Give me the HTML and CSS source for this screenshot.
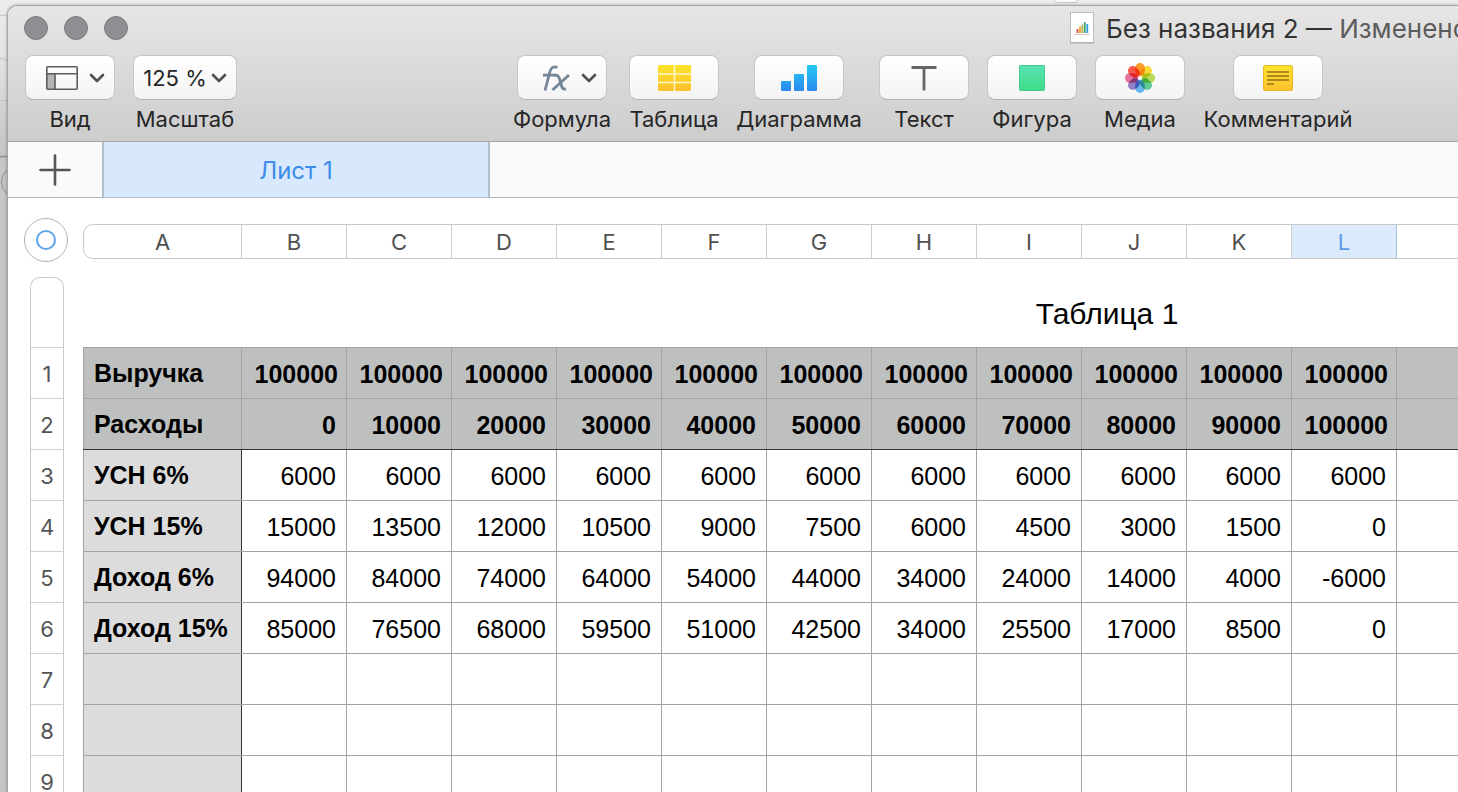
FILE: index.html
```html
<!DOCTYPE html>
<html lang="ru">
<head>
<meta charset="utf-8">
<title>Без названия 2</title>
<link rel="stylesheet" href="styles.css">
</head>
<body>
<svg class="backdrop" width="1100" height="220" viewBox="0 0 1100 220" fill="none" stroke="#aaa" aria-hidden="true">
  <path d="M0 15.500L8 15M0 58.500Q5 59 8 61M0 100.500H8" stroke="#c2c2c2"/>
  <path d="M0 156.500H8" stroke="#8c8c8c" stroke-width="1.500"/>
  <circle cx="17" cy="182" r="15.500" fill="#c4c4c4" stroke="#8f8f8f"/>
  <path d="M1054 -2V0Q1054 2.500 1058 2.500H1074Q1078 2.500 1078 0V-2" fill="#fafafa" stroke="#c8c8c8"/>
</svg>
<div class="window">
  <header class="chrome">
    <div class="titlebar">
      <div class="lights">
        <button class="light" aria-label="Закрыть"></button>
        <button class="light" aria-label="Свернуть"></button>
        <button class="light" aria-label="Развернуть"></button>
      </div>
      <div class="title">
        <svg class="doc" width="24" height="32" viewBox="0 0 24 32">
          <rect x="0.500" y="0.500" width="23" height="30" fill="#fff" stroke="#bcbcbc"/>
          <path d="M0 31H24" stroke="#aaa"/>
          <path d="M7.500 21V17" stroke="#e0503c" stroke-width="1.800"/>
          <path d="M10 21V14.500" stroke="#f0a030" stroke-width="1.800"/>
          <path d="M12.400 21V12.500" stroke="#a8b048" stroke-width="1.800"/>
          <path d="M14.800 21V10" stroke="#45a872" stroke-width="1.800"/>
          <path d="M17.300 21V12" stroke="#2f9fe0" stroke-width="1.800"/>
          <path d="M4 22.500H20" stroke="#e8c4b4"/>
        </svg>
        <span>Без названия 2 — <span class="edited">Изменено</span></span>
      </div>
    </div>
    <div class="toolbar">
      <div class="tools view-tools">
        <div class="tool">
          <button class="btn menu" id="b-view" aria-label="Вид">
            <svg width="32" height="24" viewBox="0 0 32 24" fill="none" stroke="#5c5c5c" stroke-width="1.600">
              <path d="M1 8H9V23H1Z" fill="#b5b5b5" stroke="none"/>
              <rect x="0.800" y="0.800" width="30.400" height="22.400" rx="1"/>
              <path d="M1 7.700H31M9 8V23"/>
            </svg>
            <svg width="16" height="10" viewBox="0 0 16 10" fill="none" stroke="#505050" stroke-width="2.600" stroke-linecap="round" stroke-linejoin="round"><path d="M2 2L8 8L14 2"/></svg>
          </button>
          <label for="b-view">Вид</label>
        </div>
        <div class="tool">
          <button class="btn zoom" id="b-zoom">125 %
            <svg width="16" height="10" viewBox="0 0 16 10" fill="none" stroke="#505050" stroke-width="2.600" stroke-linecap="round" stroke-linejoin="round"><path d="M2 2L8 8L14 2"/></svg>
          </button>
          <label for="b-zoom">Масштаб</label>
        </div>
      </div>
      <div class="tools insert-tools">
        <div class="tool">
          <button class="btn menu" id="b-fx" aria-label="Формула">
            <svg width="32" height="28" viewBox="0 0 32 28" fill="none" stroke="#748596" stroke-width="2.800">
              <path d="M19.500 3.400Q13.500 1.300 12 7.500L7 26.500M5 11.200H18"/>
              <path d="M15.800 11.400Q20 10.400 21.200 14L24 23Q24.800 25.600 28 24.900M31 11L14.500 26"/>
            </svg>
            <svg width="16" height="10" viewBox="0 0 16 10" fill="none" stroke="#505050" stroke-width="2.600" stroke-linecap="round" stroke-linejoin="round"><path d="M2 2L8 8L14 2"/></svg>
          </button>
          <label for="b-fx">Формула</label>
        </div>
        <div class="tool">
          <button class="btn" id="b-table" aria-label="Таблица">
            <svg width="33" height="26" viewBox="0 0 33 26">
              <defs><linearGradient id="gy" x1="0" y1="0" x2="0" y2="1"><stop offset="0" stop-color="#fde32c"/><stop offset="1" stop-color="#fcc02c"/></linearGradient></defs>
              <rect width="33" height="26" rx="1.500" fill="url(#gy)"/>
              <path d="M0 9H33M0 17.500H33M16.500 0V26" stroke="#fff6c8" stroke-width="1.500"/>
            </svg>
          </button>
          <label for="b-table">Таблица</label>
        </div>
        <div class="tool">
          <button class="btn" id="b-chart" aria-label="Диаграмма">
            <svg width="36" height="26" viewBox="0 0 36 26">
              <defs><linearGradient id="gb" gradientUnits="userSpaceOnUse" x1="0" y1="0" x2="0" y2="26"><stop offset="0" stop-color="#25c8f2"/><stop offset="1" stop-color="#2a8af0"/></linearGradient></defs>
              <g fill="url(#gb)"><rect y="16" width="10" height="10" rx="1.200"/><rect x="13" y="9" width="10" height="17" rx="1.200"/><rect x="26" width="10" height="26" rx="1.200"/></g>
            </svg>
          </button>
          <label for="b-chart">Диаграмма</label>
        </div>
        <div class="tool">
          <button class="btn" id="b-text" aria-label="Текст">
            <svg width="26" height="26" viewBox="0 0 26 26" fill="none" stroke="#666"><path d="M0.500 2.500H25.500" stroke-width="2.800"/><path d="M13 2V25.500" stroke-width="2.800"/></svg>
          </button>
          <label for="b-text">Текст</label>
        </div>
        <div class="tool">
          <button class="btn" id="b-shape" aria-label="Фигура">
            <svg width="26" height="26" viewBox="0 0 26 26">
              <defs><linearGradient id="gg" x1="0" y1="0" x2="0" y2="1"><stop offset="0" stop-color="#5ae0b4"/><stop offset="1" stop-color="#3fde8a"/></linearGradient></defs>
              <rect x="0.500" y="0.500" width="25" height="25" rx="1" fill="url(#gg)" stroke="#3fc892"/>
            </svg>
          </button>
          <label for="b-shape">Фигура</label>
        </div>
        <div class="tool">
          <button class="btn" id="b-media" aria-label="Медиа">
            <svg class="petals" width="32" height="32" viewBox="-16 -16 32 32">
              <rect x="-4.800" y="-15" width="9.600" height="13" rx="4.800" fill="#fb9a2c"/>
              <rect x="-4.800" y="-15" width="9.600" height="13" rx="4.800" fill="#f8dc38" transform="rotate(45)"/>
              <rect x="-4.800" y="-15" width="9.600" height="13" rx="4.800" fill="#b6dc5c" transform="rotate(90)"/>
              <rect x="-4.800" y="-15" width="9.600" height="13" rx="4.800" fill="#62c898" transform="rotate(135)"/>
              <rect x="-4.800" y="-15" width="9.600" height="13" rx="4.800" fill="#68b4ee" transform="rotate(180)"/>
              <rect x="-4.800" y="-15" width="9.600" height="13" rx="4.800" fill="#9480c4" transform="rotate(225)"/>
              <rect x="-4.800" y="-15" width="9.600" height="13" rx="4.800" fill="#e4709c" transform="rotate(270)"/>
              <rect x="-4.800" y="-15" width="9.600" height="13" rx="4.800" fill="#fa584c" transform="rotate(315)"/>
            </svg>
          </button>
          <label for="b-media">Медиа</label>
        </div>
        <div class="tool">
          <button class="btn" id="b-comment" aria-label="Комментарий">
            <svg width="30" height="26" viewBox="0 0 30 26">
              <rect x="0.500" y="0.500" width="29" height="25" rx="1.500" fill="url(#gy)" stroke="#e8b828"/>
              <path d="M4 7H26M4 11H26M4 15H26M4 19H11" stroke="#94721a" stroke-width="1.600"/>
            </svg>
          </button>
          <label for="b-comment">Комментарий</label>
        </div>
      </div>
    </div>
  </header>
  <nav class="tabs">
    <button class="add" aria-label="Добавить лист"><svg width="32" height="32" viewBox="0 0 32 32" stroke="#555" stroke-width="2.600" stroke-linecap="round"><path d="M1.500 16H30.500M16 1.500V30.500"/></svg></button>
    <button class="tab">Лист 1</button>
  </nav>
  <main class="sheet">
    <button class="handle" aria-label="Выбрать таблицу"><span class="ring"></span></button>
    <div class="cols">
      <span>A</span><span>B</span><span>C</span><span>D</span><span>E</span><span>F</span><span>G</span><span>H</span><span>I</span><span>J</span><span>K</span><span class="selected">L</span><span></span>
    </div>
    <div class="rows">
      <span></span><span>1</span><span>2</span><span>3</span><span>4</span><span>5</span><span>6</span><span>7</span><span>8</span><span>9</span>
    </div>
    <table class="grid">
      <caption>Таблица 1</caption>
      <colgroup><col class="c-label"><col class="c-num" span="11"><col></colgroup>
      <thead>
        <tr><th>Выручка</th><th class="full">100000</th><th class="full">100000</th><th class="full">100000</th><th class="full">100000</th><th class="full">100000</th><th class="full">100000</th><th class="full">100000</th><th class="full">100000</th><th class="full">100000</th><th class="full">100000</th><th class="full">100000</th><th></th></tr>
        <tr><th>Расходы</th><th>0</th><th>10000</th><th>20000</th><th>30000</th><th>40000</th><th>50000</th><th>60000</th><th>70000</th><th>80000</th><th>90000</th><th class="full">100000</th><th></th></tr>
      </thead>
      <tbody>
        <tr><th>УСН 6%</th><td>6000</td><td>6000</td><td>6000</td><td>6000</td><td>6000</td><td>6000</td><td>6000</td><td>6000</td><td>6000</td><td>6000</td><td>6000</td><td></td></tr>
        <tr><th>УСН 15%</th><td>15000</td><td>13500</td><td>12000</td><td>10500</td><td>9000</td><td>7500</td><td>6000</td><td>4500</td><td>3000</td><td>1500</td><td>0</td><td></td></tr>
        <tr><th>Доход 6%</th><td>94000</td><td>84000</td><td>74000</td><td>64000</td><td>54000</td><td>44000</td><td>34000</td><td>24000</td><td>14000</td><td>4000</td><td>-6000</td><td></td></tr>
        <tr><th>Доход 15%</th><td>85000</td><td>76500</td><td>68000</td><td>59500</td><td>51000</td><td>42500</td><td>34000</td><td>25500</td><td>17000</td><td>8500</td><td>0</td><td></td></tr>
        <tr><th></th><td></td><td></td><td></td><td></td><td></td><td></td><td></td><td></td><td></td><td></td><td></td><td></td></tr>
        <tr><th></th><td></td><td></td><td></td><td></td><td></td><td></td><td></td><td></td><td></td><td></td><td></td><td></td></tr>
        <tr><th></th><td></td><td></td><td></td><td></td><td></td><td></td><td></td><td></td><td></td><td></td><td></td><td></td></tr>
      </tbody>
    </table>
  </main>
</div>
</body>
</html>
```
FILE: styles.css
```css
* { box-sizing: border-box; }

body {
  margin: 0;
  height: 100vh;
  overflow: hidden;
  display: flex;
  padding: 5px 0 0 7px;
  background: linear-gradient(#ededed, #e2e2e2 60px, #c6c6c6 150px, #c4c4c4);
  font-family: Inter, Roboto, sans-serif;
  font-size: 22px;
  color: #262626;
}

button {
  margin: 0;
  padding: 0;
  border: 0;
  background: none;
  font: inherit;
  color: inherit;
}

svg { display: block; flex: none; }

.backdrop { position: absolute; top: 0; left: 0; }

.window {
  position: relative;
  flex: 1;
  min-width: 0;
  display: flex;
  flex-direction: column;
  border: 1px solid #a6a6a6;
  border-right: 0;
  border-bottom: 0;
  border-radius: 10px 0 0 0;
  background: #fff;
  overflow: hidden;
  box-shadow: 0 0 3px rgba(0, 0, 0, 0.35);
}

.chrome {
  background: linear-gradient(#e6e6e6, #cdcdcd);
  border-bottom: 1px solid #a8a8a8;
}

.titlebar {
  display: flex;
  align-items: center;
  height: 44px;
  padding-left: 16px;
}

.lights { display: flex; gap: 16px; }

.light {
  width: 24px;
  height: 24px;
  border-radius: 50%;
  border: 1px solid #7c7c80;
  background: #8e8e93;
}

.title {
  display: flex;
  align-items: center;
  gap: 12px;
  margin-left: 942px;
  white-space: nowrap;
  font-size: 26px;
  color: #333;
}

.edited { color: #5c5c5c; }

.toolbar {
  display: flex;
  padding: 5px 17px 7px;
}

.tools { display: grid; gap: 18px; }

.view-tools { grid-template-columns: 90px 104px; }

.insert-tools {
  margin-left: 276px;
  grid-template-columns: 98px 90px 124px 90px 90px 90px 150px;
}

.tool {
  display: flex;
  flex-direction: column;
  align-items: center;
  gap: 4px;
}

.tool label { line-height: 30px; white-space: nowrap; }

.btn {
  display: flex;
  align-items: center;
  justify-content: center;
  gap: 4px;
  width: 90px;
  height: 45px;
  border: 1px solid #c6c6c6;
  border-bottom-color: #b0b0b0;
  border-radius: 8px;
  background: linear-gradient(#fff, #f3f3f3);
}

.menu { gap: 11px; padding-left: 10px; }

.zoom { width: 104px; }

.petals { isolation: isolate; }
.petals rect { mix-blend-mode: multiply; }

.tabs {
  display: flex;
  height: 56px;
  background: #fafafa;
  border-bottom: 1px solid #b6b9bc;
}

.add {
  display: flex;
  align-items: center;
  justify-content: center;
  width: 94px;
}

.tab {
  width: 388px;
  padding-top: 2px;
  border: solid #aebfce;
  border-width: 0 2px 0 2px;
  background: #d9e9fd;
  color: #3d8bea;
  font-size: 24px;
}

.sheet {
  flex: 1;
  min-height: 0;
  overflow: hidden;
  display: grid;
  grid-template-columns: 44px 2048px;
  grid-template-rows: 44px auto;
  align-items: start;
  gap: 15px;
  padding: 20px 0 0 16px;
}

.handle {
  display: flex;
  align-items: center;
  justify-content: center;
  width: 44px;
  height: 44px;
  border: 1px solid #b4b4b4;
  border-radius: 50%;
}

.ring {
  width: 20px;
  height: 20px;
  border: 2px solid #5fa3ea;
  border-radius: 50%;
}

.cols {
  display: flex;
  height: 35px;
  margin-top: 6px;
  border: 1px solid #c8c8c8;
  border-radius: 10px 0 0 10px;
  overflow: hidden;
  color: #505050;
  line-height: 34px;
  text-align: center;
}

.cols span { width: 105px; border-right: 1px solid #cfcfcf; }
.cols span:first-child { width: 158px; }
.cols span:last-child { flex: 1; }
.cols .selected { background: #dcebfc; color: #5a9be6; border-color: #a9bcd6; }

.rows {
  display: flex;
  flex-direction: column;
  width: 34px;
  margin-left: 6px;
  border: 1px solid #cacaca;
  border-bottom: 0;
  border-radius: 10px 10px 0 0;
  color: #555;
  line-height: 52px;
  text-align: center;
}

.rows span { height: 51px; border-bottom: 1px solid #cfcfcf; }
.rows span:first-child { height: 70px; }

.grid {
  width: 100%;
  table-layout: fixed;
  border-collapse: collapse;
  font-family: "Liberation Sans", Arial, sans-serif;
  font-size: 25px;
  color: #000;
}

.grid caption { height: 70px; line-height: 74px; font-size: 30px; }

.c-label { width: 158px; }
.c-num { width: 105px; }

.grid th,
.grid td {
  height: 51px;
  padding: 2px 10px 0;
  border: 1px solid #a3a4a4;
  line-height: 30px;
  text-align: right;
  white-space: nowrap;
}

.grid thead th { background: #bec0bf; }
.grid th.full { padding-right: 8px; padding-left: 8px; }
.grid tr th:first-child { padding-top: 0; text-align: left; }
.grid tbody th { background: #dcdcdc; border-right-color: #333; }
.grid thead tr:last-child th { border-bottom-color: #333; }
```
